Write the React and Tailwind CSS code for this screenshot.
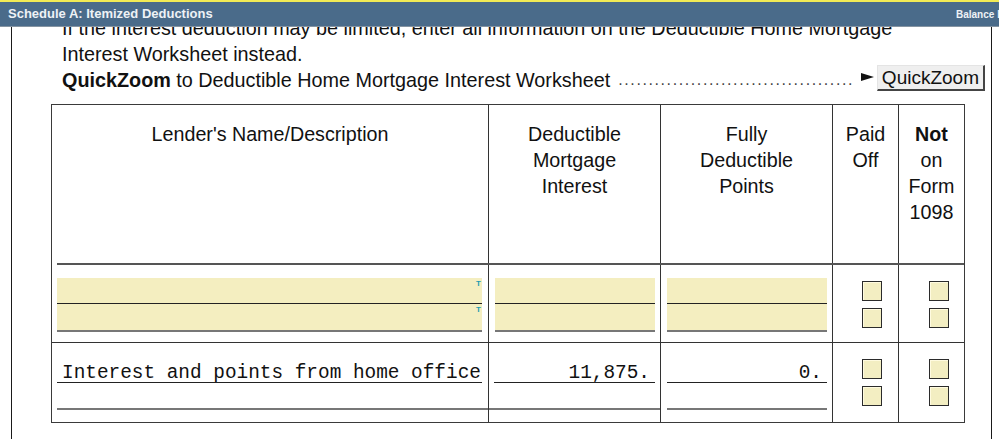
import React from "react";

const sans = { fontFamily: '"Liberation Sans", Arial, sans-serif' };
const mono = { fontFamily: '"Liberation Mono", "Courier New", monospace' };

const Checkbox = () => (
  <div className="w-[20px] h-[20px] border border-[#2b2b2b] bg-[#f3eec2] shadow-[inset_1px_1px_0_#fffbe0]" />
);

const CheckPair = ({ pl }) => (
  <div className={`flex flex-col gap-[7px] pt-[16px] ${pl}`}>
    <Checkbox />
    <Checkbox />
  </div>
);

const Field = ({ marker }) => (
  <div className="relative h-full w-full">
    {marker && (
      <span className="absolute right-[1px] top-[2px] text-[8px] leading-none font-bold text-[#1f9bb0]">
        T
      </span>
    )}
  </div>
);

const InputPair = ({ marker }) => (
  <div className="pt-[13px]">
    <div className="h-[26px] bg-[#f4eec0] border-b border-[#222]">
      <Field marker={marker} />
    </div>
    <div className="h-[28px] bg-[#f4eec0] border-b-2 border-[#777]">
      <Field marker={marker} />
    </div>
  </div>
);

export default function App() {
  return (
    <div className="w-[999px] h-[439px] bg-white overflow-hidden flex flex-col text-[#111]" style={sans}>
      {/* title bar */}
      <div className="h-[2px] bg-[#f1ea55]" />
      <div className="h-[25px] bg-[#4a6b8a] border-b border-[#8594a2] flex items-center">
        <span className="pl-[8px] text-[13px] font-bold text-[#eef2f6]">
          Schedule A: Itemized Deductions
        </span>
        <div className="ml-auto w-[43px] overflow-hidden whitespace-nowrap text-[10px] font-bold text-[#eef2f6]">
          Balance Due
        </div>
      </div>

      {/* page */}
      <div className="ml-[11px] w-[981px] flex-1 border-l border-r border-[#1a1a1a] overflow-hidden">
        <div className="-mt-[12px] text-[19.8px] leading-[26px]">
          <div className="pl-[50px] whitespace-nowrap">
            If the interest deduction may be limited, enter all information on the Deductible Home Mortgage
          </div>
          <div className="pl-[50px]">Interest Worksheet instead.</div>
          <div className="pl-[50px] pr-[6px] h-[26px] flex items-start">
            <span className="whitespace-nowrap">
              <b>QuickZoom</b> to Deductible Home Mortgage Interest Worksheet
            </span>
            <span className="flex-1 ml-[8px] overflow-hidden whitespace-nowrap text-[16px] tracking-[1.6px] text-[#444] leading-[26px]">
              ........................................................
            </span>
            <svg width="13" height="8" viewBox="0 0 13 8" className="mt-[6px] ml-[8px] mr-[3px]">
              <polygon points="0,0 13,4 0,8" fill="#111" />
            </svg>
            <button className="-mt-[2px] h-[26px] px-[4px] text-[19px] leading-[22px] bg-[#efefef] border border-t-[#e4e4e4] border-l-[#e4e4e4] border-r-2 border-b-2 border-r-[#444] border-b-[#444] text-[#111]">
              QuickZoom
            </button>
          </div>
        </div>

        {/* table */}
        <div className="ml-[39px] mt-[11px] w-[914px] border border-[#3a3a3a]">
          {/* header */}
          <div className="flex h-[158px] text-center text-[19.7px] leading-[26px]">
            <div className="w-[437px] border-r border-[#333] pt-[16px]">Lender's Name/Description</div>
            <div className="w-[172px] border-r border-[#333] pt-[16px]">
              Deductible
              <br />
              Mortgage
              <br />
              Interest
            </div>
            <div className="w-[172px] border-r border-[#333] pt-[16px]">
              Fully
              <br />
              Deductible
              <br />
              Points
            </div>
            <div className="w-[66px] border-r border-[#333] pt-[16px]">
              Paid
              <br />
              Off
            </div>
            <div className="w-[65px] pt-[16px]">
              <b>Not</b>
              <br />
              on
              <br />
              Form
              <br />
              1098
            </div>
          </div>
          <div className="flex h-[2px]">
            <div className="w-[5px]" />
            <div className="flex-1 bg-[#555]" />
          </div>

          {/* row 1 */}
          <div className="flex h-[78px] border-b border-[#333]">
            <div className="w-[437px] border-r border-[#333] pl-[5px] pr-[6px]">
              <InputPair marker />
            </div>
            <div className="w-[172px] border-r border-[#333] pl-[6px] pr-[5px]">
              <InputPair />
            </div>
            <div className="w-[172px] border-r border-[#333] pl-[6px] pr-[5px]">
              <InputPair />
            </div>
            <div className="w-[66px] border-r border-[#333]">
              <CheckPair pl="pl-[29px]" />
            </div>
            <div className="w-[65px]">
              <CheckPair pl="pl-[30px]" />
            </div>
          </div>

          {/* row 2 */}
          <div className="flex h-[79px] text-[19.4px]" style={mono}>
            <div className="w-[437px] border-r border-[#333] pl-[5px]">
              <div className="mt-[20px] mr-[6px] h-[20px] leading-[20px] border-b border-[#222] pl-[5px] whitespace-nowrap">
                Interest and points from home office
              </div>
              <div className="mt-[25px] h-[2px] bg-[#777]" />
            </div>
            <div className="w-[172px] border-r border-[#333]">
              <div className="mt-[20px] mx-[5px] h-[20px] leading-[20px] border-b border-[#222] text-right pr-[5px]">
                11,875.
              </div>
              <div className="mt-[25px] h-[2px] bg-[#777]" />
            </div>
            <div className="w-[172px] border-r border-[#333] pl-[6px] pr-[5px]">
              <div className="mt-[20px] h-[20px] leading-[20px] border-b border-[#222] text-right pr-[5px]">
                0.
              </div>
              <div className="mt-[25px] h-[2px] bg-[#777]" />
            </div>
            <div className="w-[66px] border-r border-[#333]">
              <CheckPair pl="pl-[29px]" />
            </div>
            <div className="w-[65px]">
              <CheckPair pl="pl-[30px]" />
            </div>
          </div>
        </div>
      </div>
    </div>
  );
}
